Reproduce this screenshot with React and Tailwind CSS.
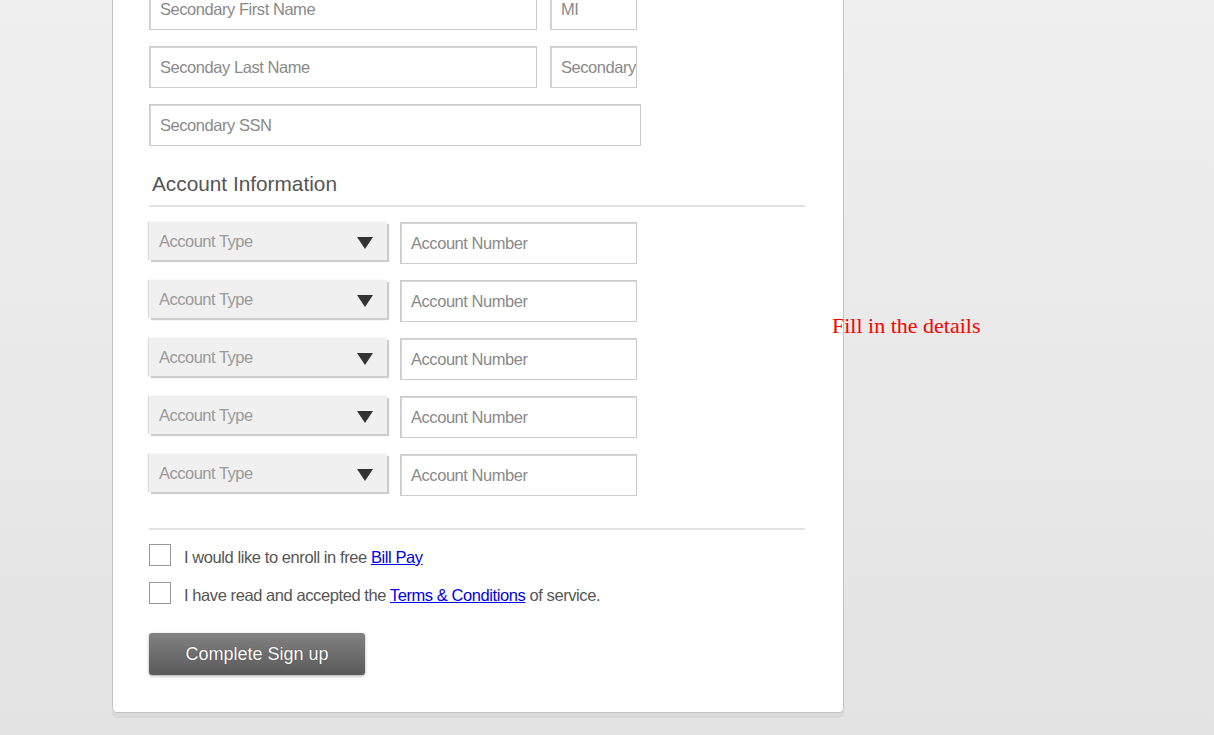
import React from "react";

const font = { fontFamily: '"Liberation Sans", Arial, sans-serif' };

function TextInput({ placeholder, w }) {
  return (
    <div
      className={`${w} h-[42px] shrink-0 border border-[#cccccc] bg-white shadow-[inset_1px_1px_0_#d6d6d6] flex items-center pl-[10px] overflow-hidden whitespace-nowrap text-[16.5px] tracking-[-0.45px] text-[#8a8a8a]`}
    >
      {placeholder}
    </div>
  );
}

function Select() {
  return (
    <div className="w-[238px] h-[38px] shrink-0 bg-[#f0f0f0] shadow-[2px_2px_1px_#cdcdcd,-1px_0_1px_#dddddd] flex items-center justify-between pl-[10px] pr-[14px] pt-[1px] text-[16.5px] tracking-[-0.5px] text-[#9a9a9a]">
      <span>Account Type</span>
      <svg width="16" height="12" viewBox="0 0 16 12" className="mt-[2px]">
        <polygon points="0,0 16,0 8,12" fill="#333333" />
      </svg>
    </div>
  );
}

function AccountRow() {
  return (
    <div className="flex items-start gap-[13px]">
      <Select />
      <TextInput placeholder="Account Number" w="w-[237px]" />
    </div>
  );
}

export default function App() {
  return (
    <div
      className="relative min-h-[735px] w-full overflow-hidden bg-gradient-to-b from-[#efefef] to-[#e3e3e3]"
      style={font}
    >
      <div className="ml-[112px] -mt-[49px] w-[732px] rounded-[5px] border border-[#c4c4c4] bg-white shadow-[0_5px_0_#d9d9d9] px-[36px] pt-[36px] pb-[37px]">
        <div className="flex flex-col gap-[16px]">
          <div className="flex gap-[13px]">
            <TextInput placeholder="Secondary First Name" w="w-[388px]" />
            <TextInput placeholder="MI" w="w-[87px]" />
          </div>
          <div className="flex gap-[13px]">
            <TextInput placeholder="Seconday Last Name" w="w-[388px]" />
            <TextInput placeholder="Secondary Suffix" w="w-[87px]" />
          </div>
          <TextInput placeholder="Secondary SSN" w="w-[492px]" />
        </div>

        <div className="mt-[26px] pl-[3px] pb-[9px] text-[20.8px] leading-[24px] text-[#555555]">
          Account Information
        </div>
        <div className="h-[2px] w-[656px] bg-[#e2e2e2]" />

        <div className="mt-[15px] flex flex-col gap-[16px]">
          <AccountRow />
          <AccountRow />
          <AccountRow />
          <AccountRow />
          <AccountRow />
        </div>

        <div className="mt-[32px] h-[2px] w-[656px] bg-[#e2e2e2]" />

        <div className="mt-[13px] flex flex-col gap-[14px] text-[16.5px] tracking-[-0.42px] leading-[24px] text-[#555555]">
          <div className="flex h-[24px] items-center gap-[13px]">
            <div className="h-[22px] w-[22px] shrink-0 border border-[#999999] bg-white" />
            <span className="translate-y-[2px]">
              I would like to enroll in free{" "}
              <a className="text-[#0000ee] underline" href="#">Bill Pay</a>
            </span>
          </div>
          <div className="flex h-[24px] items-center gap-[13px]">
            <div className="h-[22px] w-[22px] shrink-0 border border-[#999999] bg-white" />
            <span className="translate-y-[2px]">
              I have read and accepted the{" "}
              <a className="text-[#0000ee] underline" href="#">Terms &amp; Conditions</a>{" "}
              of service.
            </span>
          </div>
        </div>

        <button className="mt-[28px] flex h-[42px] w-[216px] items-center justify-center rounded-[3px] bg-gradient-to-b from-[#828282] to-[#5a5a5a] text-[18px] text-white shadow-[0_1px_3px_rgba(0,0,0,0.35)] [text-shadow:0_0_1px_rgba(0,0,0,0.6)]">
          Complete Sign up
        </button>
      </div>

      <div
        className="absolute left-[832px] top-[311px] text-[22px] leading-[30px] text-[#ff0000]"
        style={{ fontFamily: '"Liberation Serif", "Times New Roman", serif' }}
      >
        Fill in the details
      </div>
    </div>
  );
}
